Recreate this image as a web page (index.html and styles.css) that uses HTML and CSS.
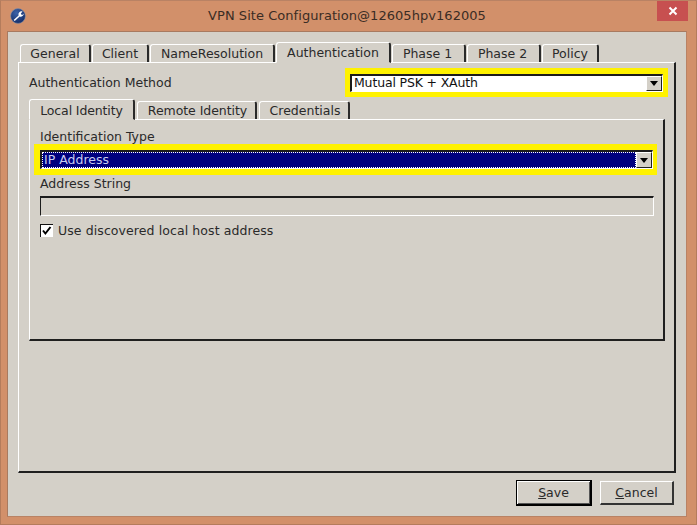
FILE: index.html
```html
<!DOCTYPE html>
<html lang="en">
<head>
<meta charset="utf-8">
<title>VPN Site Configuration</title>
<link rel="stylesheet" href="styles.css">
</head>
<body>
<div class="window">
  <header class="titlebar">
    <svg class="app-icon" width="16" height="16" viewBox="0 0 16 16">
      <defs><radialGradient id="g" cx="40%" cy="30%" r="80%"><stop offset="0" stop-color="#3d63a8"/><stop offset="1" stop-color="#0e2560"/></radialGradient></defs>
      <circle cx="8" cy="8" r="7.4" fill="url(#g)" stroke="#8a93a8" stroke-width=".6"/>
      <path d="M3.6 12 L8.6 7.4 A3 3 0 0 1 12.6 3.6 L10.8 5.4 L11.2 6.6 L12.4 6.9 L13.6 5.4 A3 3 0 0 1 9.6 8.6 L4.8 13 Z" fill="#fff"/>
    </svg>
    <span class="title">VPN Site Configuration@12605hpv162005</span>
    <div class="close"><svg width="10" height="10" viewBox="0 0 10 10"><path d="M1.5 1.5 L8.5 8.5 M8.5 1.5 L1.5 8.5" stroke="#fff" stroke-width="2"/></svg></div>
  </header>
  <main class="client">
    <nav class="tabs outer-tabs">
      <div class="tab w-general">General</div>
      <div class="tab w-client">Client</div>
      <div class="tab w-name">NameResolution</div>
      <div class="tab active w-auth">Authentication</div>
      <div class="tab w-phase">Phase 1</div>
      <div class="tab w-phase">Phase 2</div>
      <div class="tab w-policy">Policy</div>
    </nav>
    <section class="panel outer-panel">
      <div class="method-row">
        <label class="label method-label">Authentication Method</label>
        <div class="highlight method-highlight">
          <div class="combo">
            <span class="combo-text mutual">Mutual PSK + XAuth</span>
            <span class="combo-btn"><i class="arrow"></i></span>
          </div>
        </div>
      </div>
      <nav class="tabs inner-tabs">
        <div class="tab active w-local">Local Identity</div>
        <div class="tab w-remote">Remote Identity</div>
        <div class="tab w-cred">Credentials</div>
      </nav>
      <section class="panel inner-panel">
        <label class="label type-label">Identification Type</label>
        <div class="highlight type-highlight">
          <div class="combo">
            <span class="combo-text selected"><span class="focus">IP Address</span></span>
            <span class="combo-btn"><i class="arrow"></i></span>
          </div>
        </div>
        <label class="label string-label">Address String</label>
        <div class="field"></div>
        <div class="check-row">
          <svg class="check" width="13" height="13" viewBox="0 0 13 13">
            <path d="M0 0H13V13H0Z" fill="#fff"/>
            <path d="M0 13V0H13" fill="none" stroke="#111" stroke-width="2"/>
            <path d="M3 6.5 L5.4 9.5 L10.5 3" fill="none" stroke="#000" stroke-width="2"/>
          </svg>
          <span class="label check-label">Use discovered local host address</span>
        </div>
      </section>
      <div class="spacer"></div>
    </section>
    <footer class="actions">
      <button class="btn default"><u>S</u>ave</button>
      <button class="btn"><u>C</u>ancel</button>
    </footer>
  </main>
</div>
</body>
</html>
```
FILE: styles.css
```css
* { box-sizing: border-box; }
html, body { margin: 0; padding: 0; }
body {
  width: 697px; height: 525px; overflow: hidden;
  font-family: "DejaVu Sans", sans-serif; font-size: 12.5px; color: #1c1c1c;
}
.window {
  width: 697px; height: 525px; background: #d2906a;
  border: 1px solid #b47c5c; border-top-color: #b98264;
  display: flex; flex-direction: column; padding: 0 9px 7px 6px;
}
.titlebar { height: 30px; display: flex; align-items: center; position: relative; flex: none; }
.app-icon { position: absolute; left: 3px; top: 7px; }
.title {
  flex: 1; text-align: center; font-size: 13px; letter-spacing: .05px; color: #3a2c24;
  padding-bottom: 1px;
}
.close {
  position: absolute; right: -1px; top: 0; width: 31px; height: 20px; background: #c75050;
  display: flex; align-items: center; justify-content: center;
}
.client {
  flex: 1; background: #d4d0c8; border: 1px solid #a87a60;
  border-right-color: #b98264; border-bottom-color: #b98264;
  padding: 9px 11px 10px 10px; display: flex; flex-direction: column;
}
.tabs { display: flex; align-items: flex-end; flex: none; }
.outer-tabs { height: 21px; padding-left: 2px; gap: 1px; }
.inner-tabs { height: 21px; gap: 2px; margin-top: 1px; }
.tab {
  height: 18px; background: #d4d0c8; border-left: 1px solid #fff; border-top: 1px solid #fff;
  border-right: 2px solid #2a2a2a; border-radius: 3px 3px 0 0;
  text-align: center; line-height: 17px; white-space: nowrap; color: #2a2a2a;
  position: relative;
}
.tab.active { height: 21px; line-height: 19px; margin-bottom: -1px; z-index: 1; border-bottom: 1px solid #d4d0c8; }
.inner-tabs .tab.active { line-height: 21px; letter-spacing: -.12px; }
.w-general { width: 71px; }
.w-client { width: 57px; }
.w-name { width: 125px; }
.w-auth { width: 115px; }
.w-phase { width: 74px; padding-right: 2px; }
.w-policy { width: 57px; }
.w-local { width: 106px; }
.w-remote { width: 120px; letter-spacing: -.05px; padding-left: 2px; }
.w-cred { width: 91px; padding-left: 2px; }
.panel {
  border-left: 1px solid #fff; border-top: 1px solid #fff;
  border-right: 2px solid #1f1f1f; border-bottom: 2px solid #1f1f1f;
  display: flex; flex-direction: column;
}
.outer-panel { flex: 1; padding: 5px 9px 0 10px; width: 658px; }
.method-row { display: flex; align-items: center; justify-content: space-between; height: 29px; flex: none; }
.label { white-space: nowrap; color: #2a2a2a; }
.highlight { background: #d4d0c8; border: 6px solid #fff200; }
.method-highlight { width: 323px; height: 29px; margin-right: -3px; padding: 0; border-width: 6px 5px 5px 5px; }
.combo {
  display: flex; height: 18px; background: #fff;
  border-top: 2px solid #1c1c1c; border-left: 2px solid #1c1c1c;
  border-right: 1px solid #fff; border-bottom: 1px solid #fff;
}
.combo-text { flex: 1; line-height: 14px; padding-left: 1px; color: #111; white-space: nowrap; }
.mutual { padding-left: 2px; letter-spacing: -.16px; }
.combo-btn {
  width: 16px; background: #d4d0c8;
  border-left: 1px solid #fff; border-top: 1px solid #fff;
  border-right: 1px solid #222; border-bottom: 1px solid #222;
  display: flex; align-items: center; justify-content: center; flex: none;
}
.arrow { width: 0; height: 0; border: 4px solid transparent; border-top: 5px solid #000; border-bottom: 0; }
.selected { background: #00007f; color: #c8ccf0; padding: 0; line-height: 16px; }
.focus {
  display: block; height: 100%; outline: 1px dotted #fff; outline-offset: -1px;
  padding-left: 2px;
}
.inner-panel { height: 222px; padding: 9px 9px 0 10px; flex: none; margin-right: 0; width: 636px; }
.type-label { line-height: 15px; }
.type-highlight { margin: 0 0 0 -6px; width: 623px; height: 31px; border-width: 6px 4px 6px 6px; }
.type-highlight .combo { height: 19px; }
.string-label { line-height: 15px; margin-top: 1px; }
.field {
  height: 20px; width: 614px; margin-top: 5px; flex: none;
  border-top: 2px solid #1c1c1c; border-left: 1px solid #1c1c1c;
  border-right: 1px solid #fff; border-bottom: 1px solid #fff;
}
.check-row { display: flex; align-items: center; gap: 5px; margin-top: 7px; }
.check { flex: none; }
.check-label { letter-spacing: .09px; }
.spacer { flex: 1; }
.actions { display: flex; justify-content: flex-end; gap: 8px; height: 27px; margin-top: 6px; padding-right: 1px; align-items: center; flex: none; }
.btn {
  font: inherit; color: #2a2a2a; width: 74px; height: 24px; padding: 0; background: #d4d0c8;
  border-left: 1px solid #fff; border-top: 1px solid #fff;
  border-right: 2px solid #333; border-bottom: 2px solid #333; 
}
.btn.default { width: 76px; height: 26px; border: 1px solid #000; border-right-width: 2px; border-bottom-width: 2px; box-shadow: inset 1px 1px 0 #fff, inset -1px -1px 0 #555; }
```
